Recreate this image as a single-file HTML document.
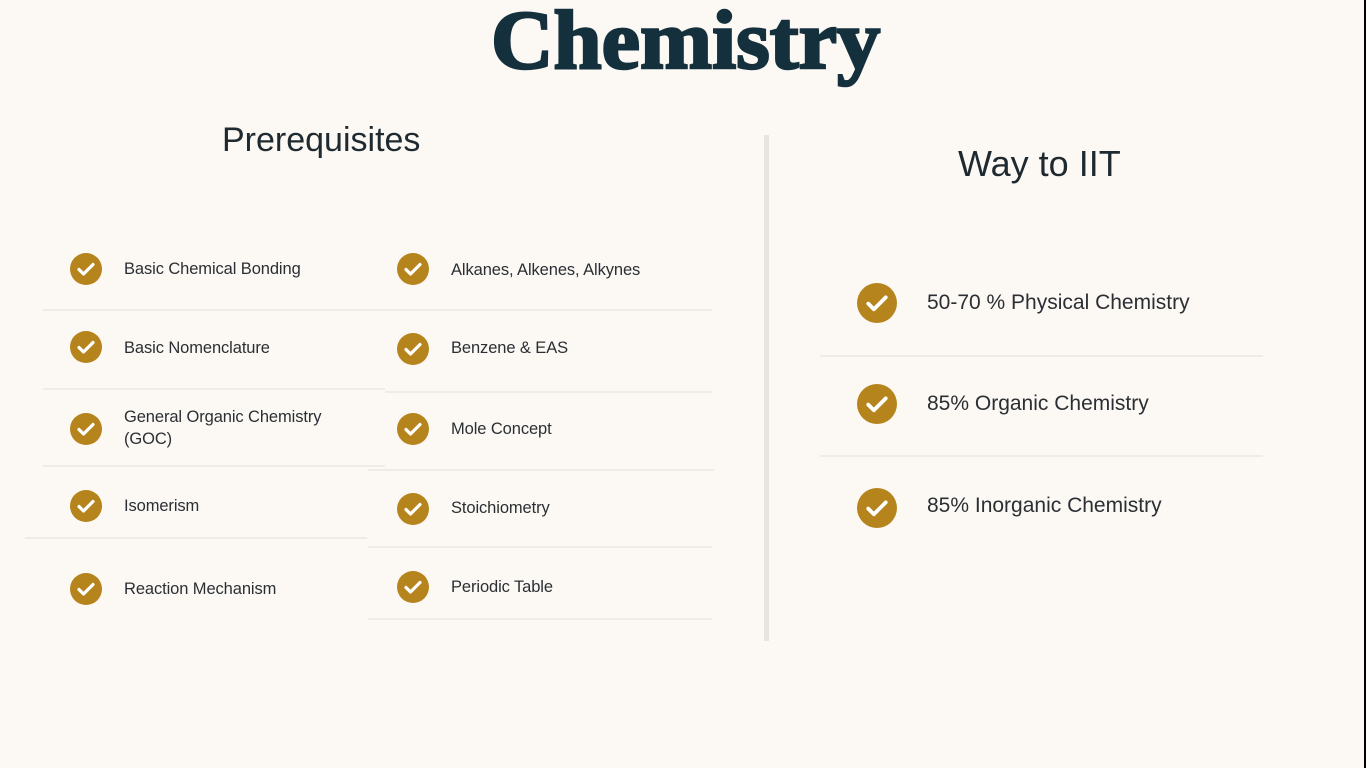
<!DOCTYPE html>
<html><head><meta charset="utf-8"><style>
*{margin:0;padding:0;box-sizing:border-box}
body{width:1366px;height:768px;background:#fcf9f5;position:relative;overflow:hidden;font-family:"Liberation Sans",sans-serif;color:#2b2f33}
.t{position:absolute;white-space:nowrap}
.c{position:absolute;border-radius:50%;background:#b5841d}
.c svg{position:absolute;left:0;top:0;width:100%;height:100%}
.l{position:absolute;height:2px;background:#efebe6}
.s{font-size:16.5px;letter-spacing:-0.1px}
.b{font-size:21px;letter-spacing:0}
</style></head><body>
<div class="t" style="left:491px;top:-8px;font-family:'Liberation Serif',serif;font-weight:bold;font-size:84px;color:#15303d;letter-spacing:0;-webkit-text-stroke:2.5px #15303d;transform:scaleX(1.03);transform-origin:left">Chemistry</div>
<div class="t" style="left:222px;top:121px;font-size:34px;color:#1f2a30">Prerequisites</div>
<div class="t" style="left:958px;top:143px;font-size:36px;color:#1f2a30">Way to IIT</div>
<div style="position:absolute;left:764px;top:135px;width:5px;height:506px;background:#e7e3de"></div>
<div style="position:absolute;left:1364px;top:0;width:2px;height:768px;background:#000"></div>

<div class="l" style="left:43px;top:309px;width:669px"></div>
<div class="l" style="left:43px;top:388px;width:342px"></div>
<div class="l" style="left:385px;top:391px;width:327px"></div>
<div class="l" style="left:43px;top:465px;width:342px"></div>
<div class="l" style="left:368px;top:469px;width:346px"></div>
<div class="l" style="left:25px;top:537px;width:342px"></div>
<div class="l" style="left:368px;top:546px;width:344px"></div>
<div class="l" style="left:368px;top:618px;width:344px"></div>
<div class="l" style="left:820px;top:355px;width:443px"></div>
<div class="l" style="left:820px;top:455px;width:443px"></div>

<div class="c" style="left:70px;top:253px;width:32px;height:32px"><svg viewBox="0 0 32 32"><path d="M9 16.5l4.5 4.5 9.5-9.5" fill="none" stroke="#fff" stroke-width="3.2" stroke-linecap="round" stroke-linejoin="round"/></svg></div>
<div class="c" style="left:70px;top:331px;width:32px;height:32px"><svg viewBox="0 0 32 32"><path d="M9 16.5l4.5 4.5 9.5-9.5" fill="none" stroke="#fff" stroke-width="3.2" stroke-linecap="round" stroke-linejoin="round"/></svg></div>
<div class="c" style="left:70px;top:413px;width:32px;height:32px"><svg viewBox="0 0 32 32"><path d="M9 16.5l4.5 4.5 9.5-9.5" fill="none" stroke="#fff" stroke-width="3.2" stroke-linecap="round" stroke-linejoin="round"/></svg></div>
<div class="c" style="left:70px;top:490px;width:32px;height:32px"><svg viewBox="0 0 32 32"><path d="M9 16.5l4.5 4.5 9.5-9.5" fill="none" stroke="#fff" stroke-width="3.2" stroke-linecap="round" stroke-linejoin="round"/></svg></div>
<div class="c" style="left:70px;top:573px;width:32px;height:32px"><svg viewBox="0 0 32 32"><path d="M9 16.5l4.5 4.5 9.5-9.5" fill="none" stroke="#fff" stroke-width="3.2" stroke-linecap="round" stroke-linejoin="round"/></svg></div>
<div class="t s" style="left:124px;top:260px">Basic Chemical Bonding</div>
<div class="t s" style="left:124px;top:339px">Basic Nomenclature</div>
<div class="t s" style="left:124px;top:406px;line-height:22px">General Organic Chemistry<br>(GOC)</div>
<div class="t s" style="left:124px;top:497px">Isomerism</div>
<div class="t s" style="left:124px;top:580px">Reaction Mechanism</div>

<div class="c" style="left:397px;top:253px;width:32px;height:32px"><svg viewBox="0 0 32 32"><path d="M9 16.5l4.5 4.5 9.5-9.5" fill="none" stroke="#fff" stroke-width="3.2" stroke-linecap="round" stroke-linejoin="round"/></svg></div>
<div class="c" style="left:397px;top:333px;width:32px;height:32px"><svg viewBox="0 0 32 32"><path d="M9 16.5l4.5 4.5 9.5-9.5" fill="none" stroke="#fff" stroke-width="3.2" stroke-linecap="round" stroke-linejoin="round"/></svg></div>
<div class="c" style="left:397px;top:413px;width:32px;height:32px"><svg viewBox="0 0 32 32"><path d="M9 16.5l4.5 4.5 9.5-9.5" fill="none" stroke="#fff" stroke-width="3.2" stroke-linecap="round" stroke-linejoin="round"/></svg></div>
<div class="c" style="left:397px;top:493px;width:32px;height:32px"><svg viewBox="0 0 32 32"><path d="M9 16.5l4.5 4.5 9.5-9.5" fill="none" stroke="#fff" stroke-width="3.2" stroke-linecap="round" stroke-linejoin="round"/></svg></div>
<div class="c" style="left:397px;top:571px;width:32px;height:32px"><svg viewBox="0 0 32 32"><path d="M9 16.5l4.5 4.5 9.5-9.5" fill="none" stroke="#fff" stroke-width="3.2" stroke-linecap="round" stroke-linejoin="round"/></svg></div>
<div class="t s" style="left:451px;top:261px">Alkanes, Alkenes, Alkynes</div>
<div class="t s" style="left:451px;top:339px">Benzene &amp; EAS</div>
<div class="t s" style="left:451px;top:420px">Mole Concept</div>
<div class="t s" style="left:451px;top:499px">Stoichiometry</div>
<div class="t s" style="left:451px;top:578px">Periodic Table</div>

<div class="c" style="left:857px;top:283px;width:40px;height:40px"><svg viewBox="0 0 32 32"><path d="M9 16.5l4.5 4.5 9.5-9.5" fill="none" stroke="#fff" stroke-width="3" stroke-linecap="round" stroke-linejoin="round"/></svg></div>
<div class="c" style="left:857px;top:384px;width:40px;height:40px"><svg viewBox="0 0 32 32"><path d="M9 16.5l4.5 4.5 9.5-9.5" fill="none" stroke="#fff" stroke-width="3" stroke-linecap="round" stroke-linejoin="round"/></svg></div>
<div class="c" style="left:857px;top:488px;width:40px;height:40px"><svg viewBox="0 0 32 32"><path d="M9 16.5l4.5 4.5 9.5-9.5" fill="none" stroke="#fff" stroke-width="3" stroke-linecap="round" stroke-linejoin="round"/></svg></div>
<div class="t b" style="left:927px;top:291px">50-70 % Physical Chemistry</div>
<div class="t b" style="left:927px;top:392px">85% Organic Chemistry</div>
<div class="t b" style="left:927px;top:494px">85% Inorganic Chemistry</div>
</body></html>
